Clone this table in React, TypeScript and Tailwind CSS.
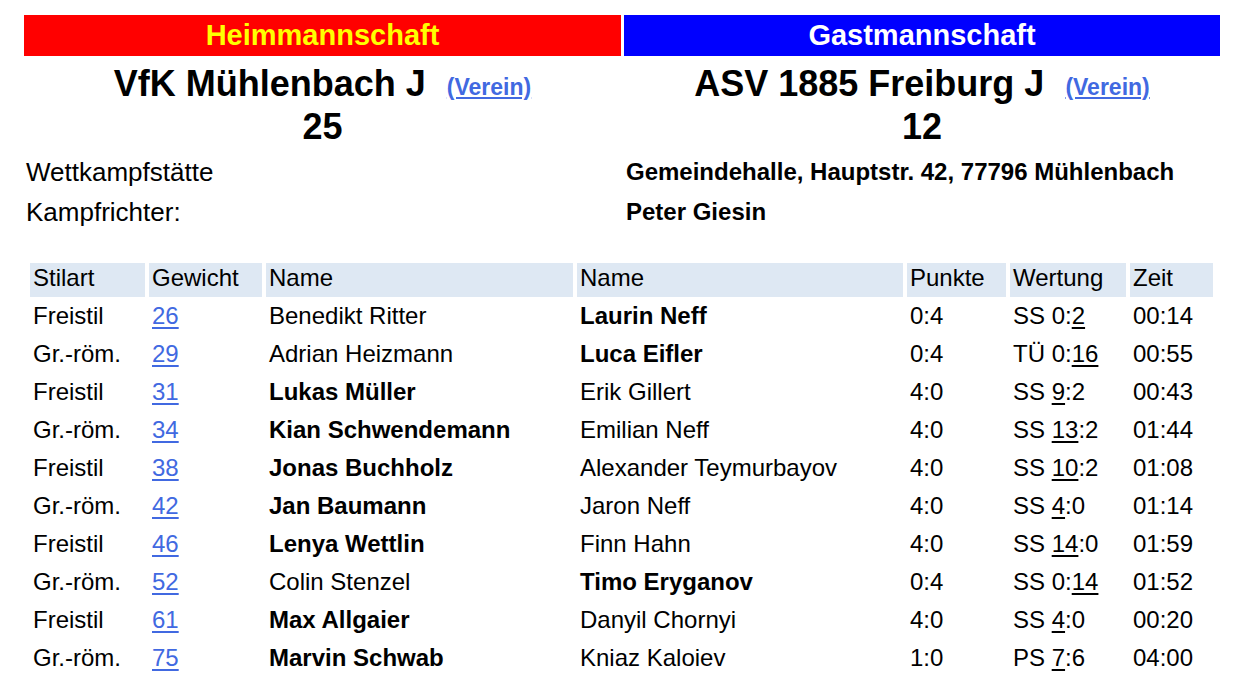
import React from "react";

type Row = {
  stil: string;
  gew: string;
  n1: string;
  b1: boolean;
  n2: string;
  b2: boolean;
  p: string;
  w: [string, string, string, string];
  z: string;
};

const rows: Row[] = [
  { stil: "Freistil", gew: "26", n1: "Benedikt Ritter", b1: false, n2: "Laurin Neff", b2: true, p: "0:4", w: ["SS ", "0", ":", "2"], z: "00:14" },
  { stil: "Gr.-röm.", gew: "29", n1: "Adrian Heizmann", b1: false, n2: "Luca Eifler", b2: true, p: "0:4", w: ["TÜ ", "0", ":", "16"], z: "00:55" },
  { stil: "Freistil", gew: "31", n1: "Lukas Müller", b1: true, n2: "Erik Gillert", b2: false, p: "4:0", w: ["SS ", "9", ":", "2"], z: "00:43" },
  { stil: "Gr.-röm.", gew: "34", n1: "Kian Schwendemann", b1: true, n2: "Emilian Neff", b2: false, p: "4:0", w: ["SS ", "13", ":", "2"], z: "01:44" },
  { stil: "Freistil", gew: "38", n1: "Jonas Buchholz", b1: true, n2: "Alexander Teymurbayov", b2: false, p: "4:0", w: ["SS ", "10", ":", "2"], z: "01:08" },
  { stil: "Gr.-röm.", gew: "42", n1: "Jan Baumann", b1: true, n2: "Jaron Neff", b2: false, p: "4:0", w: ["SS ", "4", ":", "0"], z: "01:14" },
  { stil: "Freistil", gew: "46", n1: "Lenya Wettlin", b1: true, n2: "Finn Hahn", b2: false, p: "4:0", w: ["SS ", "14", ":", "0"], z: "01:59" },
  { stil: "Gr.-röm.", gew: "52", n1: "Colin Stenzel", b1: false, n2: "Timo Eryganov", b2: true, p: "0:4", w: ["SS ", "0", ":", "14"], z: "01:52" },
  { stil: "Freistil", gew: "61", n1: "Max Allgaier", b1: true, n2: "Danyil Chornyi", b2: false, p: "4:0", w: ["SS ", "4", ":", "0"], z: "00:20" },
  { stil: "Gr.-röm.", gew: "75", n1: "Marvin Schwab", b1: true, n2: "Kniaz Kaloiev", b2: false, p: "1:0", w: ["PS ", "7", ":", "6"], z: "04:00" },
];

function Wertung({ w, home }: { w: Row["w"]; home: boolean }) {
  return (
    <span>
      {w[0]}
      {home ? <span className="underline underline-offset-[3px]">{w[1]}</span> : w[1]}
      {w[2]}
      {!home ? <span className="underline underline-offset-[3px]">{w[3]}</span> : w[3]}
    </span>
  );
}

const cols = "grid grid-cols-[115px_113px_307px_326px_99px_116px_83px] gap-x-[4px]";
const cell = "flex items-center pl-[3px] pb-[4px] leading-[30px]";

export default function App() {
  return (
    <div
      className="w-[1248px] h-[684px] overflow-hidden bg-white text-black"
      style={{ fontFamily: '"Liberation Sans", Arial, sans-serif' }}
    >
      <div className="pt-[15px] pl-[24px]">
        <div className="flex gap-[3px]">
          <div className="w-[597px] h-[41px] bg-[#ff0000] flex items-center justify-center text-[29px] font-bold text-[#ffff00]">
            Heimmannschaft
          </div>
          <div className="w-[596px] h-[41px] bg-[#0000ff] flex items-center justify-center text-[29px] font-bold text-white">
            Gastmannschaft
          </div>
        </div>
        <div className="flex gap-[3px]">
          <div className="w-[597px] flex flex-col items-center">
            <div className="h-[56px] flex items-center">
              <span className="text-[36px] font-bold">VfK Mühlenbach J</span>
              <a className="ml-[21px] mt-[6px] text-[23px] font-bold text-[#4169e1] underline">(Verein)</a>
            </div>
            <div className="h-[30px] flex items-center text-[36px] font-bold">25</div>
          </div>
          <div className="w-[596px] flex flex-col items-center">
            <div className="h-[56px] flex items-center">
              <span className="text-[36px] font-bold">ASV 1885 Freiburg J</span>
              <a className="ml-[21px] mt-[6px] text-[23px] font-bold text-[#4169e1] underline">(Verein)</a>
            </div>
            <div className="h-[30px] flex items-center text-[36px] font-bold">12</div>
          </div>
        </div>
        <div className="flex gap-[3px] mt-[10px]">
          <div className="w-[597px] pl-[2px]">
            <div className="h-[40px] flex items-center text-[26px]">Wettkampfstätte</div>
            <div className="h-[40px] flex items-center text-[26px]">Kampfrichter:</div>
          </div>
          <div className="w-[596px] pl-[2px]">
            <div className="h-[40px] flex items-center text-[24px] font-bold">Gemeindehalle, Hauptstr. 42, 77796 Mühlenbach</div>
            <div className="h-[40px] flex items-center text-[24px] font-bold">Peter Giesin</div>
          </div>
        </div>
      </div>

      <div className="pl-[30px] pt-[31px] text-[24px]">
        <div className={cols + " h-[34px]"}>
          {["Stilart", "Gewicht", "Name", "Name", "Punkte", "Wertung", "Zeit"].map((h, i) => (
            <div key={i} className={"bg-[#dee8f3] " + cell}>
              {h}
            </div>
          ))}
        </div>
        {rows.map((r, i) => {
          const home = !r.b2;
          return (
            <div key={i} className={cols + " h-[34px] mt-[4px]"}>
              <div className={cell}>{r.stil}</div>
              <div className={cell}>
                <a className="text-[#4169e1] underline underline-offset-[3px]">{r.gew}</a>
              </div>
              <div className={cell + (r.b1 ? " font-bold" : "")}>{r.n1}</div>
              <div className={cell + (r.b2 ? " font-bold" : "")}>{r.n2}</div>
              <div className={cell}>{r.p}</div>
              <div className={cell}>
                <Wertung w={r.w} home={home} />
              </div>
              <div className={cell}>{r.z}</div>
            </div>
          );
        })}
      </div>
    </div>
  );
}
